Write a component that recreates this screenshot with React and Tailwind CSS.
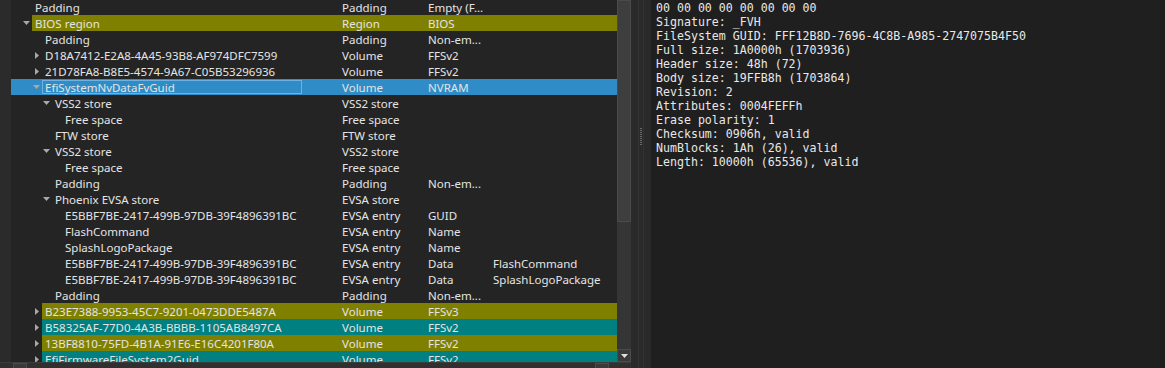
import React from 'react'

// Tree rows: level, name, type, subtype, text, arrow ('down' | 'right' | null), tint
const ROWS = [
  { lvl: 1, name: 'Padding', type: 'Padding', sub: 'Empty (F...' },
  { lvl: 1, name: 'BIOS region', type: 'Region', sub: 'BIOS', arrow: 'down', tint: 'olive' },
  { lvl: 2, name: 'Padding', type: 'Padding', sub: 'Non-em...' },
  { lvl: 2, name: 'D18A7412-E2A8-4A45-93B8-AF974DFC7599', type: 'Volume', sub: 'FFSv2', arrow: 'right' },
  { lvl: 2, name: '21D78FA8-B8E5-4574-9A67-C05B53296936', type: 'Volume', sub: 'FFSv2', arrow: 'right' },
  { lvl: 2, name: 'EfiSystemNvDataFvGuid', type: 'Volume', sub: 'NVRAM', arrow: 'down', selected: true },
  { lvl: 3, name: 'VSS2 store', type: 'VSS2 store', arrow: 'down' },
  { lvl: 4, name: 'Free space', type: 'Free space' },
  { lvl: 3, name: 'FTW store', type: 'FTW store' },
  { lvl: 3, name: 'VSS2 store', type: 'VSS2 store', arrow: 'down' },
  { lvl: 4, name: 'Free space', type: 'Free space' },
  { lvl: 3, name: 'Padding', type: 'Padding', sub: 'Non-em...' },
  { lvl: 3, name: 'Phoenix EVSA store', type: 'EVSA store', arrow: 'down' },
  { lvl: 4, name: 'E5BBF7BE-2417-499B-97DB-39F4896391BC', type: 'EVSA entry', sub: 'GUID' },
  { lvl: 4, name: 'FlashCommand', type: 'EVSA entry', sub: 'Name' },
  { lvl: 4, name: 'SplashLogoPackage', type: 'EVSA entry', sub: 'Name' },
  { lvl: 4, name: 'E5BBF7BE-2417-499B-97DB-39F4896391BC', type: 'EVSA entry', sub: 'Data', text: 'FlashCommand' },
  { lvl: 4, name: 'E5BBF7BE-2417-499B-97DB-39F4896391BC', type: 'EVSA entry', sub: 'Data', text: 'SplashLogoPackage' },
  { lvl: 3, name: 'Padding', type: 'Padding', sub: 'Non-em...' },
  { lvl: 2, name: 'B23E7388-9953-45C7-9201-0473DDE5487A', type: 'Volume', sub: 'FFSv3', arrow: 'right', tint: 'olive' },
  { lvl: 2, name: 'B58325AF-77D0-4A3B-BBBB-1105AB8497CA', type: 'Volume', sub: 'FFSv2', arrow: 'right', tint: 'teal' },
  { lvl: 2, name: '13BF8810-75FD-4B1A-91E6-E16C4201F80A', type: 'Volume', sub: 'FFSv2', arrow: 'right', tint: 'olive' },
  { lvl: 2, name: 'EfiFirmwareFileSystem2Guid', type: 'Volume', sub: 'FFSv2', arrow: 'right', tint: 'teal' },
]

const INFO = [
  '00 00 00 00 00 00 00 00',
  'Signature: _FVH',
  'FileSystem GUID: FFF12B8D-7696-4C8B-A985-2747075B4F50',
  'Full size: 1A0000h (1703936)',
  'Header size: 48h (72)',
  'Body size: 19FFB8h (1703864)',
  'Revision: 2',
  'Attributes: 0004FEFFh',
  'Erase polarity: 1',
  'Checksum: 0906h, valid',
  'NumBlocks: 1Ah (26), valid',
  'Length: 10000h (65536), valid',
]

const INDENT = {
  1: 'w-[10px]',
  2: 'w-[20px]',
  3: 'w-[30px]',
  4: 'w-[40px]',
}

function Arrow({ dir }) {
  if (dir === 'down') {
    return (
      <svg width="7" height="4" viewBox="0 0 7 4" className="block">
        <path d="M0 0 H7 L3.5 4 Z" fill="#a8a8a8" />
      </svg>
    )
  }
  if (dir === 'right') {
    return (
      <svg width="4" height="7" viewBox="0 0 4 7" className="block">
        <path d="M0 0 L4 3.5 L0 7 Z" fill="#a8a8a8" />
      </svg>
    )
  }
  return null
}

function TreeRow({ row }) {
  const tint =
    row.tint === 'olive' ? 'bg-[#808000]' : row.tint === 'teal' ? 'bg-[#008080]' : ''
  return (
    <div
      className={`relative flex h-[16px] items-center whitespace-nowrap ${
        row.selected ? 'bg-[#308cc6]' : ''
      }`}
    >
      <div className={`shrink-0 ${INDENT[row.lvl]}`} />
      <div className="flex w-[11px] shrink-0 items-center justify-center">
        <Arrow dir={row.arrow} />
      </div>
      <div className={`flex h-full flex-1 items-center pt-[2px] ${tint}`}>
        <div className="flex-1 truncate pl-[3px]">{row.name}</div>
        <div className="w-[86px] shrink-0 pl-[3px]">{row.type}</div>
        <div className="w-[65px] shrink-0 pl-[3px]">{row.sub}</div>
        <div className="w-[127px] shrink-0 pl-[3px]">{row.text}</div>
      </div>
      {row.selected && (
        <div className="pointer-events-none absolute left-[31px] top-[1px] h-[14px] w-[260px] border border-[#6cb2e3]" />
      )}
    </div>
  )
}

function VScroll() {
  return (
    <div className="flex w-[14px] shrink-0 flex-col bg-[#353535]">
      <div className="h-[222px] border border-[#4a4a4a] bg-[#3e3e3e]" />
      <div className="flex-1" />
      <div className="flex h-[13px] items-center justify-center border border-[#4c4c4c] bg-[#3a3a3a]">
        <svg width="7" height="4" viewBox="0 0 7 4">
          <path d="M0 0 H7 L3.5 4 Z" fill="#e0e0e0" />
        </svg>
      </div>
    </div>
  )
}

function HScroll() {
  return (
    <div className="flex h-[6px] border-t border-[#3c3c3c] bg-[#303030]">
      <div className="w-[13px] shrink-0" />
      <div className="w-[14px] shrink-0 border border-b-0 border-[#4c4c4c] bg-[#3a3a3a]" />
      <div className="flex-1" />
      <div className="w-[14px] shrink-0 border border-b-0 border-[#4c4c4c] bg-[#3a3a3a]" />
      <div className="w-[22px] shrink-0" />
    </div>
  )
}

export default function App() {
  return (
    <div className="flex h-[368px] w-[1165px] overflow-hidden bg-[#232323] text-[11.5px] text-[#e4e4e4] [font-family:'Noto_Sans',sans-serif]">
      {/* structure tree */}
      <div className="flex w-[631px] shrink-0 flex-col">
        <div className="flex min-h-0 flex-1">
          <div className="w-[11px] shrink-0 bg-[#2b2b2b]" />
          <div className="min-w-0 flex-1 overflow-hidden bg-[#242424]">
            <div className="-mt-px">
              {ROWS.map((r, i) => (
                <TreeRow key={i} row={r} />
              ))}
            </div>
          </div>
          <VScroll />
        </div>
        <HScroll />
      </div>

      {/* splitter */}
      <div className="flex w-[20px] shrink-0 bg-[#2a2a2a]">
        <div className="w-[7px] shrink-0" />
        <div className="w-px shrink-0 bg-[#333333]" />
        <div className="flex w-[4px] shrink-0 flex-col items-center justify-center gap-[1px] pb-[96px]">
          {Array.from({ length: 9 }).map((_, i) => (
            <div key={i} className="h-px w-[2px] bg-[#6a6a6a]" />
          ))}
        </div>
        <div className="w-px shrink-0 bg-[#333333]" />
        <div className="flex-1" />
      </div>

      {/* info panel */}
      <div className="flex-1 bg-[#1f1f1f] pl-[5px] pt-[1px] text-[11.6px] leading-[14px] text-[#e8e8e8] [font-family:'DejaVu_Sans_Mono',monospace]">
        {INFO.map((l, i) => (
          <div key={i} className="whitespace-pre">
            {l}
          </div>
        ))}
      </div>
    </div>
  )
}
